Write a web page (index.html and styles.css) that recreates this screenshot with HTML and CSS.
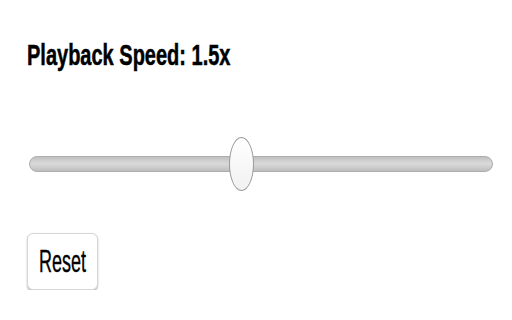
FILE: index.html
```html
<!DOCTYPE html>
<html>
<head>
<meta charset="utf-8">
<link rel="stylesheet" href="styles.css">
</head>
<body>
<main class="panel">
  <div class="title"><span class="title-text">Playback Speed: 1.5x</span></div>
  <input class="speed" type="range" min="0.25" max="3" step="0.25" value="1.5">
  <button class="reset"><span class="reset-text">Reset</span></button>
</main>
</body>
</html>
```
FILE: styles.css
```css
html, body {
  margin: 0;
  padding: 0;
  background: #ffffff;
}
.panel {
  display: flex;
  flex-direction: column;
  align-items: flex-start;
  padding: 40px 0 0 27px;
  font-family: "Liberation Sans", Arial, sans-serif;
  color: #000;
}
.title {
  height: 20px;
  line-height: 20px;
  font-size: 20px;
  font-weight: bold;
}
.title-text {
  display: inline-block;
  transform: scaleY(1.47);
  transform-origin: 0 0;
  -webkit-text-stroke: 0.35px #000;
}
.speed {
  -webkit-appearance: none;
  appearance: none;
  background: transparent;
  margin: 77px 0 0 2px;
  padding: 0;
  width: 464px;
  height: 54px;
}
.speed::-webkit-slider-runnable-track {
  height: 16px;
  border-radius: 8px;
  border: 1px solid #adadad;
  background: linear-gradient(#c0c0c0, #d9d9d9 45%, #d4d4d4 60%, #bebebe);
}
.speed::-webkit-slider-thumb {
  -webkit-appearance: none;
  appearance: none;
  width: 25px;
  height: 54px;
  margin-top: -20px;
  border-radius: 50%;
  border: 1.5px solid #999999;
  background: linear-gradient(#ffffff, #f1f1f1);
  box-sizing: border-box;
}
.reset {
  margin-top: 42px;
  width: 71px;
  height: 57px;
  padding: 0;
  border: 1px solid #d6d6d6;
  border-radius: 6px;
  background: #ffffff;
  box-shadow: 0 1.5px 2px rgba(0, 0, 0, 0.25);
  font-family: "Liberation Sans", Arial, sans-serif;
  font-size: 18px;
  line-height: 18px;
  color: #000;
}
.reset-text {
  display: inline-block;
  transform: scaleY(1.72);
  -webkit-text-stroke: 0.2px #000;
}
```
